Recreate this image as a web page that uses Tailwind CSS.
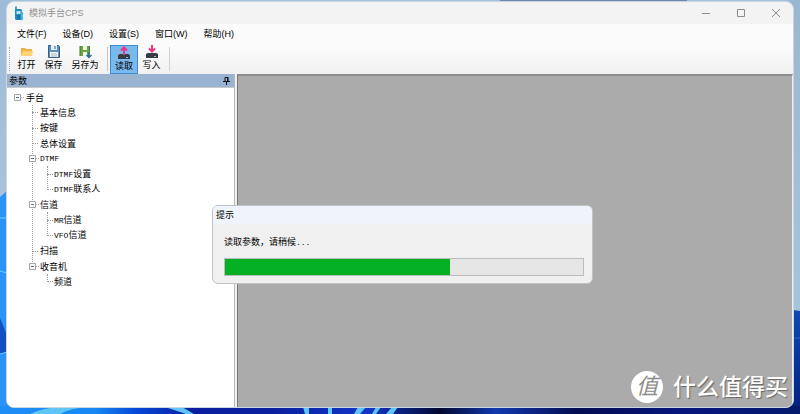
<!DOCTYPE html>
<html lang="zh-CN">
<head>
  <meta charset="UTF-8" />
  <meta name="viewport" content="width=device-width, initial-scale=1.0" />
  <title>模拟手台CPS</title>
  <script src="https://cdn.jsdelivr.net/npm/@tailwindcss/browser@4"></script>
</head>
<body class="relative h-screen overflow-hidden bg-[#a5c2dc] font-['Liberation_Sans','Noto_Sans_CJK_SC',sans-serif] text-[9px] text-black">
  <!-- wallpaper -->
  <svg class="absolute inset-0 h-full w-full" viewBox="0 0 800 414" preserveAspectRatio="none" aria-hidden="true">
    <defs>
      <linearGradient id="sideL" x1="0" y1="0" x2="0" y2="1">
        <stop offset="0" stop-color="#9dbbd8" /><stop offset="1" stop-color="#b4cade" />
      </linearGradient>
      <linearGradient id="sideR" x1="0" y1="0" x2="0" y2="1">
        <stop offset="0" stop-color="#98b8d2" /><stop offset="1" stop-color="#aac8e0" />
      </linearGradient>
      <linearGradient id="hill" x1="0" y1="0" x2="0" y2="1">
        <stop offset="0" stop-color="#1049b8" /><stop offset="1" stop-color="#03207c" />
      </linearGradient>
      <linearGradient id="floor" x1="0" y1="0" x2="1" y2="0">
        <stop offset="0" stop-color="#1e8ef5" /><stop offset="0.12" stop-color="#1787f2" /><stop offset="0.17" stop-color="#0647d8" />
        <stop offset="0.24" stop-color="#0a1fa0" /><stop offset="0.34" stop-color="#0a1f9e" /><stop offset="0.46" stop-color="#1236c8" />
        <stop offset="0.55" stop-color="#02082e" /><stop offset="0.62" stop-color="#1238b0" /><stop offset="0.72" stop-color="#030d50" />
        <stop offset="0.85" stop-color="#06157c" /><stop offset="1" stop-color="#031a6c" />
      </linearGradient>
    </defs>
    <rect width="12" height="414" fill="url(#sideL)" />
    <rect x="788" width="12" height="414" fill="url(#sideR)" />
    <rect x="500" width="187" height="2" fill="#7084ac" />
    <path d="M0 197L8 190H14V414H0Z" fill="#2b93f8" />
    <path d="M0 318L7 335V352L0 354Z" fill="#1450bd" />
    <path d="M0 218h7M0 271l7 2M0 354l7-2" stroke="#74ccff" fill="none" />
    <path d="M786 309L800 311V414H786Z" fill="url(#hill)" />
    <path d="M790 338h10" stroke="#2c68cc" />
    <rect y="406" width="800" height="8" fill="url(#floor)" />
    <path d="M30 414Q42 408 60 407H90Q70 408 60 414ZM165 407H182L194 414H186ZM303 407h6v7h-4ZM328 407h4v7h-4ZM358 407h8l-6 7h-6ZM376 407h5l-5 7h-4ZM392 407h6l-5 7h-7Z" fill="#5fc4f6" />
  </svg>

  <main class="absolute top-px right-[6px] bottom-[6px] left-[6px] flex flex-col overflow-hidden rounded-lg border border-[#cbd5e2] bg-[#f3f3f3]">
    <header class="flex h-[22px] shrink-0 items-center">
      <svg class="ml-[6px] h-[15px] w-[12px]" viewBox="0 0 12 15" aria-hidden="true">
        <path d="M3 0.5V5" stroke="#2488be" stroke-width="1.6" />
        <rect x="2" y="3" width="7" height="11" rx="1.5" fill="#218bc2" />
        <rect x="3.5" y="5" width="4" height="3" fill="#b7e7f6" />
        <path d="M4 10h3M4 12h3" stroke="#0e5e95" />
        <path d="M8 5l2 2-1 3 1 3-2 1" fill="#49b5df" stroke="#49b5df" />
      </svg>
      <h1 class="ml-[4px] leading-4 text-[#929292]">模拟手台CPS</h1>
      <div class="ml-auto flex text-[#8c8c8c]">
        <button class="flex h-5 w-[35px] items-center justify-center" aria-label="最小化"><svg class="h-2 w-2" viewBox="0 0 8 8"><path d="M0 4.5h8" stroke="currentColor" /></svg></button>
        <button class="flex h-5 w-[35px] items-center justify-center" aria-label="最大化"><svg class="h-2 w-2" viewBox="0 0 8 8"><path d="M.5.5h7v7h-7z" stroke="currentColor" fill="none" /></svg></button>
        <button class="flex h-5 w-[35px] items-center justify-center" aria-label="关闭"><svg class="h-2 w-2" viewBox="0 0 8 8"><path d="M0 0l8 8M8 0L0 8" stroke="currentColor" /></svg></button>
      </div>
    </header>

    <nav class="flex h-5 shrink-0 items-center gap-4 bg-[#fbfbfb] pl-[10px] leading-4">
      <button>文件(F)</button>
      <button>设备(D)</button>
      <button>设置(S)</button>
      <button>窗口(W)</button>
      <button>帮助(H)</button>
    </nav>

    <div class="flex h-[30px] shrink-0 items-center bg-linear-to-b from-[#fcfcfc] to-[#f1f1f1] pl-[2px] leading-3" role="toolbar">
      <span class="h-6 border-l border-dotted border-[#aaa]"></span>
      <button class="ml-[3px] flex h-7 w-[27px] flex-col items-center">
        <svg class="h-[14px] w-[14px]" viewBox="0 0 14 14" aria-hidden="true"><path d="M1 3h4l1 1h6v7H1z" fill="#efb343" /><path d="M3 6h10l-1 5H1z" fill="#ffd477" /></svg>
        打开
      </button>
      <button class="flex h-7 w-[27px] flex-col items-center">
        <svg class="h-[14px] w-[14px]" viewBox="0 0 14 14" aria-hidden="true"><path d="M1.500 .5h10l1 1v11h-11z" fill="#5d91bc" stroke="#385f83" /><path d="M4 0h6v5H4z" fill="#e3eef5" /><path d="M8 1v3" stroke="#385f83" /><path d="M3 7h8v5H3z" fill="#f4f5f5" /><path d="M4 9h6M4 11h6" stroke="#a2b5c1" /></svg>
        保存
      </button>
      <button class="flex h-7 w-9 flex-col items-center">
        <svg class="h-[14px] w-[14px]" viewBox="0 0 14 14" aria-hidden="true"><path d="M2 1h10v10H2z" fill="#6ca445" /><path d="M5 1h4v4H5zM5 7h4v4H5z" fill="#f0f5e9" /><path d="M2 1v10M11.500 1v5" stroke="#44762b" /><path d="M11 7v5M8.500 10L11 12.500l2.500-2.500" stroke="#2c6d9c" stroke-width="1.5" fill="none" /></svg>
        另存为
      </button>
      <span class="mr-[2px] ml-1 h-6 border-l border-[#c6c6c6]"></span>
      <button class="flex h-[29px] w-7 flex-col items-center border border-[#3e8ccd] bg-[#7ab9ee]">
        <svg class="h-[14px] w-[14px] shrink-0" viewBox="0 0 14 14" aria-hidden="true"><path d="M1 9l2-1h8l2 1v4H1z" fill="#333b44" /><path d="M7 9V3M4 4.500l3-3 3 3" stroke="#ed3585" stroke-width="2" fill="none" /><path d="M9 11.500h2" stroke="#a5b7c5" /></svg>
        读取
      </button>
      <button class="flex h-7 w-[27px] flex-col items-center">
        <svg class="h-[14px] w-[14px]" viewBox="0 0 14 14" aria-hidden="true"><path d="M1 9l2-1h8l2 1v4H1z" fill="#333b44" /><path d="M7 0v6M4 3.500l3 3 3-3" stroke="#ed3585" stroke-width="2" fill="none" /><path d="M9 11.500h2" stroke="#a5b7c5" /></svg>
        写入
      </button>
      <span class="ml-1 h-6 border-l border-[#d0d0d0]"></span>
    </div>

    <div class="flex min-h-0 flex-1 bg-[#f0f0f0]">
      <aside class="flex w-[228px] shrink-0 flex-col border-r border-[#b8b8b8] bg-white">
        <div class="flex h-[13px] shrink-0 items-center justify-between bg-[#9ab3d0] pr-1 pl-[2px] leading-3">
          <h2>参数</h2>
          <button aria-label="固定"><svg class="h-2 w-[7px]" viewBox="0 0 7 8"><path d="M2 .5h3M2 .5V4M4.500 .5V4M0 4.500h7M3.500 5v3" stroke="#111" fill="none" /><path d="M4 0h1.500v4H4z" fill="#111" /></svg></button>
        </div>
        <ul class="border-t border-[#c8c8c8] pt-[2px] pl-[7px] leading-3">
          <li>
            <div class="flex h-[15px] items-center gap-[2px]"><svg class="h-[7px] w-[10px]" viewBox="0 0 10 7"><path d="M.5.5h6v6h-6z" fill="#fff" stroke="#a4a4a4" /><path d="M2 3.500h3" stroke="#526b94" /><path d="M7 3.500h3" stroke="#aaa" stroke-dasharray="1" /></svg>手台</div>
            <!-- the dotted trunk runs behind the expand boxes -->
            <ul class="relative ml-[15px] before:absolute before:top-0 before:bottom-[23px] before:left-[3px] before:border-l before:border-dotted before:border-[#999]">
              <li class="flex h-[15px] items-center gap-[2px] pl-[3px]"><span class="w-[6px] border-t border-dotted border-[#999]"></span>基本信息</li>
              <li class="flex h-4 items-center gap-[2px] pl-[3px]"><span class="w-[6px] border-t border-dotted border-[#999]"></span>按键</li>
              <li class="flex h-[15px] items-center gap-[2px] pl-[3px]"><span class="w-[6px] border-t border-dotted border-[#999]"></span>总体设置</li>
              <li>
                <div class="relative flex h-[15px] items-center gap-px"><svg class="h-[7px] w-[10px]" viewBox="0 0 10 7"><path d="M.5.5h6v6h-6z" fill="#fff" stroke="#a4a4a4" /><path d="M2 3.500h3" stroke="#526b94" /><path d="M7 3.500h3" stroke="#aaa" stroke-dasharray="1" /></svg><span class="font-['Liberation_Mono',monospace] text-[8px]">DTMF</span></div>
                <ul class="relative ml-[18px] before:absolute before:top-0 before:bottom-[7px] before:left-0 before:border-l before:border-dotted before:border-[#999]">
                  <li class="flex h-4 items-center gap-px"><span class="w-[6px] border-t border-dotted border-[#999]"></span><span><span class="font-['Liberation_Mono',monospace] text-[8px]">DTMF</span>设置</span></li>
                  <li class="flex h-[15px] items-center gap-px"><span class="w-[6px] border-t border-dotted border-[#999]"></span><span><span class="font-['Liberation_Mono',monospace] text-[8px]">DTMF</span>联系人</span></li>
                </ul>
              </li>
              <li>
                <div class="relative flex h-[15px] items-center gap-px"><svg class="h-[7px] w-[10px]" viewBox="0 0 10 7"><path d="M.5.5h6v6h-6z" fill="#fff" stroke="#a4a4a4" /><path d="M2 3.500h3" stroke="#526b94" /><path d="M7 3.500h3" stroke="#aaa" stroke-dasharray="1" /></svg>信道</div>
                <ul class="relative ml-[18px] before:absolute before:top-0 before:bottom-[7px] before:left-0 before:border-l before:border-dotted before:border-[#999]">
                  <li class="flex h-4 items-center gap-px"><span class="w-[6px] border-t border-dotted border-[#999]"></span><span><span class="font-['Liberation_Mono',monospace] text-[8px]">MR</span>信道</span></li>
                  <li class="flex h-[15px] items-center gap-px"><span class="w-[6px] border-t border-dotted border-[#999]"></span><span><span class="font-['Liberation_Mono',monospace] text-[8px]">VFO</span>信道</span></li>
                </ul>
              </li>
              <li class="flex h-4 items-center gap-[2px] pl-[3px]"><span class="w-[6px] border-t border-dotted border-[#999]"></span>扫描</li>
              <li>
                <div class="relative flex h-[15px] items-center gap-px"><svg class="h-[7px] w-[10px]" viewBox="0 0 10 7"><path d="M.5.5h6v6h-6z" fill="#fff" stroke="#a4a4a4" /><path d="M2 3.500h3" stroke="#526b94" /><path d="M7 3.500h3" stroke="#aaa" stroke-dasharray="1" /></svg>收音机</div>
                <ul class="relative ml-[18px] before:absolute before:top-0 before:bottom-[7px] before:left-0 before:border-l before:border-dotted before:border-[#999]">
                  <li class="flex h-[15px] items-center gap-px"><span class="w-[6px] border-t border-dotted border-[#999]"></span>频道</li>
                </ul>
              </li>
            </ul>
          </li>
        </ul>
      </aside>
      <section class="ml-[2px] flex-1 border-t-2 border-r border-l border-t-[#8d8d8d] border-r-[#eeeeee] border-l-[#777777] bg-[#ababab]"></section>
    </div>
  </main>

  <section class="absolute top-[205px] left-[212px] w-[381px] overflow-hidden rounded-md border border-[#bfc3ca] bg-[#f0f0f0]" role="dialog" aria-labelledby="tip">
    <h2 id="tip" class="bg-[#eff3fb] pl-[3px] leading-[18px]">提示</h2>
    <div class="pt-3 pr-2 pb-[7px] pl-[11px]">
      <label for="reading" class="block leading-3">读取参数，请稍候<span class="font-['Liberation_Mono',monospace] text-[8px]">...</span></label>
      <progress id="reading" value="226" max="360" class="mt-[9px] block h-[18px] w-full appearance-none border border-[#bcbcbc] bg-[#e6e6e6] [&::-webkit-progress-bar]:bg-[#e6e6e6] [&::-webkit-progress-value]:bg-[#06b025]"></progress>
    </div>
  </section>

  <!-- watermark -->
  <div class="absolute right-3 bottom-[11px] flex items-center gap-[10px] leading-8 text-white">
    <span class="flex h-8 w-8 items-center justify-center rounded-full bg-white text-[22px] text-[#8c8c8c] italic">值</span>
    <span class="text-[23px] font-medium text-shadow-[1px_1px_1px_#666666]">什么值得买</span>
  </div>
</body>
</html>
